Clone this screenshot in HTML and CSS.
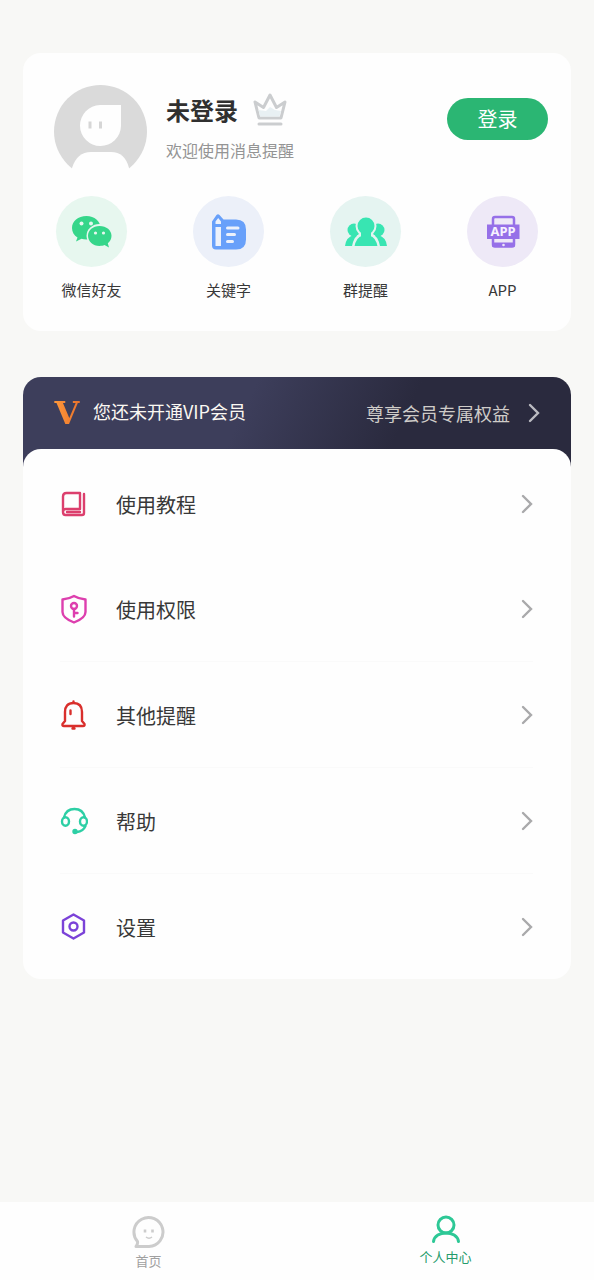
FILE: index.html
```html
<!DOCTYPE html>
<html lang="zh-CN">
<head>
<meta charset="utf-8">
<meta name="viewport" content="width=device-width, initial-scale=1">
<title>个人中心</title>
<link rel="stylesheet" href="styles.css">
</head>
<body>
<main class="content">
  <section class="card">
    <div class="profile">
      <svg class="avatar" viewBox="0 0 93 93" aria-hidden="true">
        <circle cx="46.500" cy="46.500" r="46.500" fill="#dadada"/>
        <path d="M46 20H67V41A20.500 20.500 0 1 1 46 20Z" fill="#fefefe"/>
        <path d="M36 36.500v7M46.500 36.500v7" stroke="#d6d6d6" stroke-width="3"/>
        <path d="M18 93V83Q23 67 37 67H57Q71 67 75 83V93Z" fill="#fefefe"/>
      </svg>
      <div class="identity">
        <div class="name-row">
          <h1 class="name">未登录</h1>
          <svg class="crown" viewBox="0 0 34 34" fill="none" stroke="#cbcdcf" stroke-width="3" stroke-linejoin="round" aria-hidden="true">
            <path d="M6 25 2 9l8.500 5.500L17 2l6.500 12.500L32 9l-4 16Z"/>
            <path d="M7 23.500 5.500 17 13 18l4-4 5 3 6 1-1.500 5.500Z" fill="#e8f0f3" stroke="none"/>
            <path d="M6 31h22" stroke-linecap="round"/>
          </svg>
        </div>
        <p class="welcome">欢迎使用消息提醒</p>
      </div>
      <button class="login" type="button">登录</button>
    </div>
    <nav class="shortcuts" aria-label="提醒类型">
      <a class="shortcut" href="#wechat">
        <span class="disc disc-green">
          <svg viewBox="0 0 42 34" width="42" height="34" aria-hidden="true">
            <path d="M15.500 1C7 1 1 6.300 1 13c0 4 2 7.300 5.500 9.500L5 26.500l5.500-2.800c7 2.500 19-1 19-10.700C29.500 6.300 23.500 1 15.500 1Z" fill="#36d68a"/>
            <ellipse cx="28.500" cy="20.800" rx="13" ry="11.800" fill="#e7f7ef"/>
            <path d="M28.500 11C22 11 17 15.300 17 20.800S22 31 28.500 31c2 0 3.500-.3 5-.9l4.500 2.400-1.200-4.200c2.300-1.800 3.700-4.500 3.700-7.500 0-5.500-5-9.800-12-9.800Z" fill="#36d68a"/>
            <g fill="#e7f7ef"><circle cx="10.500" cy="8.500" r="2"/><circle cx="20" cy="8.500" r="2"/><circle cx="24.500" cy="18" r="1.600"/><circle cx="32.500" cy="18" r="1.600"/></g>
          </svg>
        </span>
        <span class="caption">微信好友</span>
      </a>
      <a class="shortcut" href="#keyword">
        <span class="disc disc-blue">
          <svg viewBox="0 0 36 38" width="36" height="38" aria-hidden="true">
            <path d="M1 8.500 5.500 2Q7 .5 8.500 2L12.500 6.500H25Q35 6.500 35 16.500V26.500Q35 36.500 25 36.500H5Q1 36.500 1 32.500Z" fill="#68a0fa"/>
            <path d="M4.500 11V8.500L7.200 5 10 8.500V11ZM4.500 14H10V33H4.500Z" fill="#ecf1fb"/>
            <path d="M16.500 15H27M16.500 21.500H23.500M16.500 28.500H21.500" stroke="#ecf1fb" stroke-width="3" stroke-linecap="round"/>
          </svg>
        </span>
        <span class="caption">关键字</span>
      </a>
      <a class="shortcut" href="#group">
        <span class="disc disc-mint">
          <svg viewBox="0 0 42 30" width="42" height="30" aria-hidden="true">
            <g fill="#38e5b2">
              <circle cx="9" cy="13" r="6.500"/><circle cx="33" cy="13" r="6.500"/>
              <path d="M0 29Q1 20 9 18Q17 20 17 29ZM42 29Q41 20 33 18Q25 20 25 29Z"/>
            </g>
            <path d="M8 30.300Q10 19 17 17.500H25Q32 19 34 30.300Z" fill="#38e5b2" stroke="#e5f4f1" stroke-width="2.500"/>
            <circle cx="21" cy="9" r="9.500" fill="#38e5b2" stroke="#e5f4f1" stroke-width="2"/>
            <path d="M16 15h10v6H16Z" fill="#38e5b2"/>
          </svg>
        </span>
        <span class="caption">群提醒</span>
      </a>
      <a class="shortcut" href="#app">
        <span class="disc disc-violet">
          <svg viewBox="0 0 34 34" width="34" height="34" aria-hidden="true">
            <rect x="7" y="2" width="21" height="29.500" rx="2" fill="none" stroke="#9670e8" stroke-width="2.500"/>
            <path d="M6.500 27.500H28.500V32H6.500ZM1 9.500H33.500V24H1Z" fill="#9670e8"/>
            <circle cx="17.500" cy="30" r="1.300" fill="#eee9f7"/>
            <text class="app-mark" x="17" y="21" text-anchor="middle">APP</text>
          </svg>
        </span>
        <span class="caption">APP</span>
      </a>
    </nav>
  </section>

  <section class="member">
    <a class="vip" href="#vip">
      <span class="vip-mark" aria-hidden="true">V</span>
      <span class="vip-status">您还未开通VIP会员</span>
      <span class="vip-offer">尊享会员专属权益</span>
      <svg class="chevron chevron-vip" viewBox="0 0 12 20" aria-hidden="true"><path d="m2 2 8 8-8 8"/></svg>
    </a>
    <nav class="menu" aria-label="功能菜单">
      <a class="item" href="#guide">
        <svg class="icon icon-rose" viewBox="0 0 28 30" aria-hidden="true">
          <path d="M3 23V7.500Q3 4 6.500 4H20V20H5.500Q3 20 3 23T5.500 26H22Q24 26 24 24V5M7 23H20"/>
        </svg>
        <span class="label">使用教程</span>
        <svg class="chevron" viewBox="0 0 12 20" aria-hidden="true"><path d="m2 2 8 8-8 8"/></svg>
      </a>
      <a class="item divided" href="#permission">
        <svg class="icon icon-pink" viewBox="0 0 28 30" aria-hidden="true">
          <path d="M14 2Q19 5 25.500 5.500V18Q25.500 24 14 28.500Q2.500 24 2.500 18V5.500Q9 5 14 2Z"/>
          <circle cx="14" cy="12" r="3"/><path d="M14 15v7.500M14 19h3.500"/>
        </svg>
        <span class="label">使用权限</span>
        <svg class="chevron" viewBox="0 0 12 20" aria-hidden="true"><path d="m2 2 8 8-8 8"/></svg>
      </a>
      <a class="item divided" href="#other">
        <svg class="icon icon-red" viewBox="0 0 28 30" aria-hidden="true">
          <path d="M13.500 1.500V3M5 21V12Q5 3 13.500 3T22 12V21L24.500 24Q25 26 23 26H4Q2 26 2.500 24L5 21ZM10.500 10.500v3.500M12.500 28.500h2"/>
        </svg>
        <span class="label">其他提醒</span>
        <svg class="chevron" viewBox="0 0 12 20" aria-hidden="true"><path d="m2 2 8 8-8 8"/></svg>
      </a>
      <a class="item divided" href="#help">
        <svg class="icon icon-teal" viewBox="0 0 28 30" aria-hidden="true">
          <path d="M4 11.500Q6 3 14.500 3T25 11.500M25.500 20Q23 25.500 17 26"/>
          <ellipse cx="5.500" cy="15.500" rx="3.500" ry="4.200"/><ellipse cx="23.500" cy="15.500" rx="3.500" ry="4.200"/>
          <circle class="solid" cx="15" cy="25.500" r="1.500"/>
        </svg>
        <span class="label">帮助</span>
        <svg class="chevron" viewBox="0 0 12 20" aria-hidden="true"><path d="m2 2 8 8-8 8"/></svg>
      </a>
      <a class="item" href="#settings">
        <svg class="icon icon-purple" viewBox="0 0 28 30" aria-hidden="true">
          <path d="M13.500 2.500 24 8.500V20.500L13.500 26.500 3 20.500V8.500Z"/><circle cx="13.500" cy="14.500" r="4"/>
        </svg>
        <span class="label">设置</span>
        <svg class="chevron" viewBox="0 0 12 20" aria-hidden="true"><path d="m2 2 8 8-8 8"/></svg>
      </a>
    </nav>
  </section>
</main>

<nav class="tabs" aria-label="主导航">
  <a class="tab" href="#home">
    <svg viewBox="0 0 34 34" width="34" height="34" fill="none" stroke="#cccccc" stroke-width="3" stroke-linejoin="round" aria-hidden="true">
      <path d="M4 31.500Q6 29 5.500 26.500A14.500 14.500 0 1 1 17 31.500Z"/>
      <path d="M13 14.500v3M20.500 14.500v3" stroke-width="2.600"/><path d="M14 22q3 2.500 6 0" stroke-width="1.500"/>
    </svg>
    <span class="tab-label">首页</span>
  </a>
  <a class="tab tab-active" href="#me" aria-current="page">
    <svg viewBox="0 0 30 30" width="30" height="30" fill="none" stroke="#2dc896" stroke-width="3" stroke-linecap="round" aria-hidden="true">
      <circle cx="15" cy="10" r="8"/><path d="M2.500 26.500C4 15 26 15 27.500 26.500"/>
    </svg>
    <span class="tab-label">个人中心</span>
  </a>
</nav>
</body>
</html>
```
FILE: styles.css
```css
* {
  box-sizing: border-box;
}

body {
  display: flex;
  flex-direction: column;
  min-height: 100vh;
  margin: 0;
  background: #f8f8f6;
  color: #383838;
  font-family: "Noto Sans CJK SC", "Noto Sans", sans-serif;
}

a {
  color: inherit;
  text-decoration: none;
}

h1,
p {
  margin: 0;
}

svg {
  display: block;
  flex: none;
}

.content {
  display: flex;
  flex-direction: column;
  gap: 46px;
  padding: 53px 23px 32px;
}

.card {
  padding: 32px 0 29px;
  border-radius: 18px;
  background: #fefefe;
}

.profile {
  display: flex;
  align-items: flex-start;
  padding: 0 23px 0 31px;
}

.avatar {
  width: 93px;
  height: 93px;
}

.identity {
  flex: 1;
  padding: 7px 0 0 19px;
}

.name-row {
  display: flex;
  align-items: center;
  gap: 15px;
}

.name {
  color: #303030;
  font-size: 24px;
  font-weight: 700;
  line-height: 36px;
}

.crown {
  width: 34px;
  height: 34px;
}

.welcome {
  margin-top: 10px;
  color: #949494;
  font-size: 16px;
  line-height: 24px;
}

.login {
  width: 101px;
  height: 42px;
  margin-top: 13px;
  padding: 0;
  border: 0;
  border-radius: 21px;
  background: #2bb673;
  color: #ffffff;
  font: inherit;
  font-size: 20px;
  line-height: 42px;
}

.shortcuts {
  display: grid;
  grid-template-columns: repeat(4, 1fr);
  margin-top: 18px;
}

.shortcut {
  display: flex;
  flex-direction: column;
  align-items: center;
  gap: 11px;
}

.disc {
  display: flex;
  align-items: center;
  justify-content: center;
  width: 71px;
  height: 71px;
  border-radius: 50%;
}

.disc-green {
  background: #e7f7ef;
}

.disc-blue {
  background: #ecf0f9;
}

.disc-mint {
  background: #e5f4f1;
}

.disc-violet {
  background: #eee9f7;
}

.app-mark {
  fill: #f6f2ff;
  font-family: "Noto Sans", sans-serif;
  font-size: 13px;
  font-weight: 700;
}

.caption {
  font-size: 15px;
  line-height: 24px;
}

.vip {
  display: flex;
  align-items: center;
  height: 90px;
  padding: 0 31px 18px 30px;
  border-radius: 18px 18px 0 0;
  background: linear-gradient(115deg, #3d3e5b 0%, #3d3e5b 40%, #2a2a3e 68%, #2a2a3e 100%);
}

.vip-mark {
  width: 28px;
  background: linear-gradient(90deg, #ff9a3c, #e8702a);
  background-clip: text;
  color: transparent;
  font-family: "DejaVu Serif", serif;
  font-size: 32px;
  font-weight: 700;
  line-height: 40px;
  text-align: center;
}

.vip-status {
  padding: 0 0 5px 12px;
  color: #fbf8f2;
  font-size: 18px;
  line-height: 26px;
}

.vip-offer {
  margin-left: auto;
  color: #cfccc8;
  font-size: 18px;
  line-height: 26px;
}

.chevron {
  width: 12px;
  height: 20px;
  margin-left: auto;
  fill: none;
  stroke: #a9a9ab;
  stroke-width: 2.4;
  stroke-linecap: round;
}

.chevron-vip {
  margin-left: 18px;
  stroke: #bcbcc2;
}

.menu {
  position: relative;
  margin-top: -18px;
  padding: 2px 38px 0 37px;
  border-radius: 18px;
  background: #fefefe;
}

.item {
  display: flex;
  align-items: center;
  height: 105px;
}

.divided {
  height: 106px;
  border-bottom: 1px solid #fafafa;
}

.icon {
  width: 28px;
  height: 30px;
  fill: none;
  stroke: currentColor;
  stroke-width: 2.4;
  stroke-linecap: round;
  stroke-linejoin: round;
}

.solid {
  fill: currentColor;
}

.icon-rose {
  color: #dc3f6d;
}

.icon-pink {
  color: #dd3fae;
}

.icon-red {
  color: #d92f2c;
}

.icon-teal {
  color: #2dcfa5;
}

.icon-purple {
  color: #7b42d8;
}

.label {
  padding: 2px 0 0 28px;
  font-size: 20px;
  line-height: 30px;
}

.tabs {
  display: grid;
  grid-template-columns: repeat(2, 1fr);
  height: 78px;
  margin-top: auto;
  background: #fefefe;
}

.tab {
  display: flex;
  flex-direction: column;
  align-items: center;
  padding-top: 13px;
  color: #a0a0a0;
}

.tab-label {
  margin-top: 2px;
  font-size: 13px;
  line-height: 20px;
}

.tab-active {
  color: #249b6b;
}
```
